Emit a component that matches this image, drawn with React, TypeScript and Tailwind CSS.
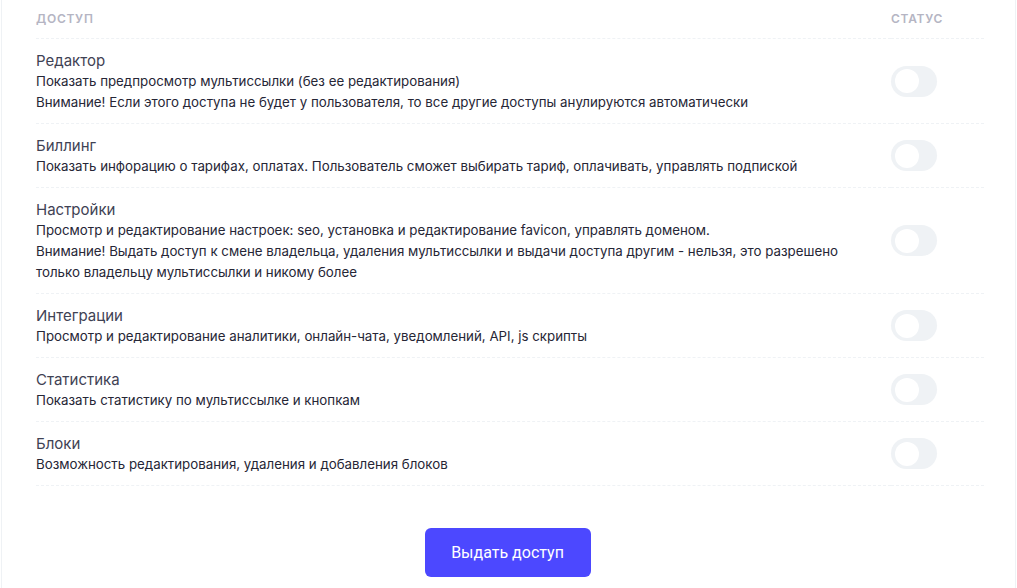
import { useState } from 'react';

type Access = {
  id: string;
  title: string;
  lines: string[];
};

const accesses: Access[] = [
  {
    id: 'editor',
    title: 'Редактор',
    lines: [
      'Показать предпросмотр мультиссылки (без ее редактирования)',
      'Внимание! Если этого доступа не будет у пользователя, то все другие доступы анулируются автоматически',
    ],
  },
  {
    id: 'billing',
    title: 'Биллинг',
    lines: ['Показать инфорацию о тарифах, оплатах. Пользователь сможет выбирать тариф, оплачивать, управлять подпиской'],
  },
  {
    id: 'settings',
    title: 'Настройки',
    lines: [
      'Просмотр и редактирование настроек: seo, установка и редактирование favicon, управлять доменом.',
      'Внимание! Выдать доступ к смене владельца, удаления мультиссылки и выдачи доступа другим - нельзя, это разрешено только владельцу мультиссылки и никому более',
    ],
  },
  {
    id: 'integrations',
    title: 'Интеграции',
    lines: ['Просмотр и редактирование аналитики, онлайн-чата, уведомлений, API, js скрипты'],
  },
  {
    id: 'stats',
    title: 'Статистика',
    lines: ['Показать статистику по мультиссылке и кнопкам'],
  },
  {
    id: 'blocks',
    title: 'Блоки',
    lines: ['Возможность редактирования, удаления и добавления блоков'],
  },
];

function Switch({ checked, onChange }: { checked: boolean; onChange: () => void }) {
  return (
    <button
      type="button"
      onClick={onChange}
      className={`relative block w-[46px] h-[31px] rounded-full transition-colors ${
        checked ? 'bg-[#4c48ff]' : 'bg-[#eff2f5]'
      }`}
    >
      <span
        className={`absolute top-[3.5px] w-[24px] h-[24px] rounded-full bg-white transition-all ${
          checked ? 'left-[19px]' : 'left-[4px]'
        }`}
      />
    </button>
  );
}

export default function App() {
  const [enabled, setEnabled] = useState<Record<string, boolean>>({});

  const toggle = (id: string) => setEnabled((s) => ({ ...s, [id]: !s[id] }));

  return (
    <div className="min-h-screen bg-white pl-[1px] font-[Inter,sans-serif]">
      <div className="w-[1015px] border-x border-[#eff2f5] bg-white pl-[34px] pr-[31px]">
        <table className="w-full border-collapse">
          <thead>
            <tr className="border-b border-dashed border-[#eff2f5]">
              <th className="pt-[10px] pb-[10px] text-left text-[12px] leading-[18px] font-semibold tracking-[0.06em] uppercase text-[#b5b5c3]">
                Доступ
              </th>
              <th className="w-[93px] pt-[10px] pb-[10px] text-left text-[12px] leading-[18px] font-semibold tracking-[0.06em] uppercase text-[#b5b5c3]">
                Статус
              </th>
            </tr>
          </thead>
          <tbody>
            {accesses.map((a) => (
              <tr key={a.id} className="border-b border-dashed border-[#eff2f5]">
                <td className="pt-[11px] pb-[10px] pr-[40px]">
                  <div className="text-[15px] leading-[21px] text-[#3f4254]">{a.title}</div>
                  {a.lines.map((l, i) => (
                    <div key={i} className="text-[13.3px] leading-[21px] text-[#262636]">
                      {l}
                    </div>
                  ))}
                </td>
                <td className="align-middle">
                  <Switch checked={!!enabled[a.id]} onChange={() => toggle(a.id)} />
                </td>
              </tr>
            ))}
          </tbody>
        </table>

        <div className="flex justify-center pt-[42px] pb-[11px] pr-[5px]">
          <button className="w-[166px] h-[49px] rounded-[6px] bg-[#4c48ff] text-white text-[16px] font-[Roboto,sans-serif]">
            Выдать доступ
          </button>
        </div>
      </div>
    </div>
  );
}
